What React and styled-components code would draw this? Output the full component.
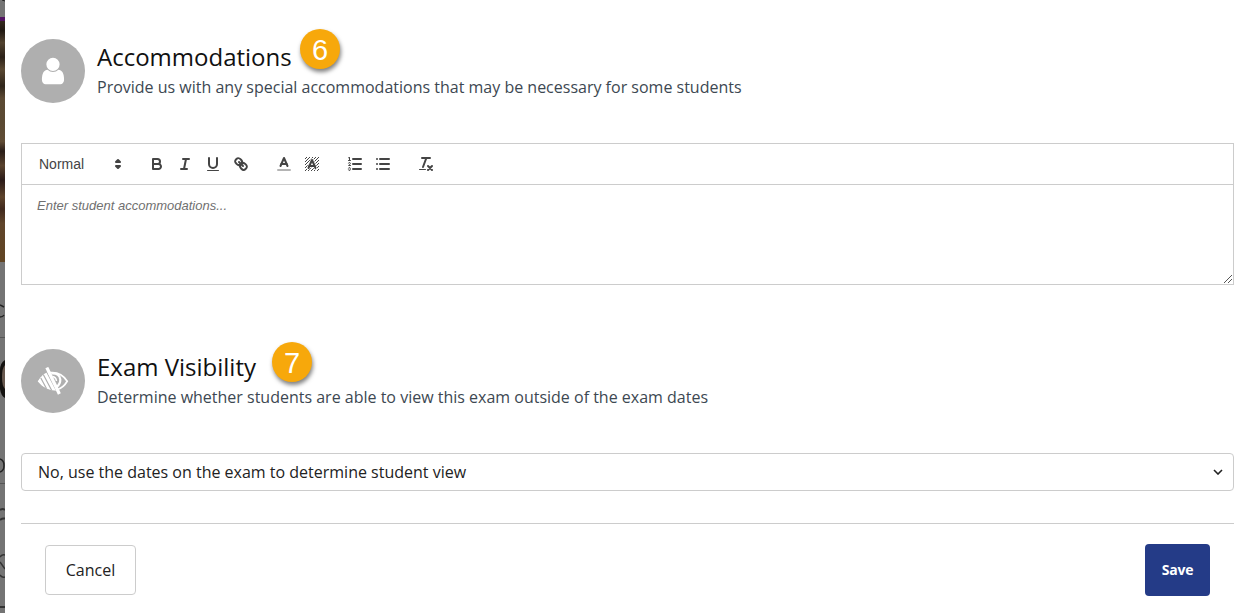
import styled, { createGlobalStyle } from 'styled-components';

const App = () => {
  return (
    <Page>
      <GlobalStyle />
      <PageEdge />
      <Modal>
        <Section>
          <SectionHeader icon={<UserIcon />} title='Accommodations' step='6' stepX={279} stepY={-10}>
            Provide us with any special accommodations that may be necessary for some students
          </SectionHeader>
          <Editor>
            <Toolbar />
            <EditorBody>
              Enter student accommodations...
              <ResizeHandle viewBox='0 0 10 10'>
                <path d='M1 9L9 1M5 9L9 5' />
              </ResizeHandle>
            </EditorBody>
          </Editor>
        </Section>
        <Section>
          <SectionHeader icon={<LowVisionIcon />} title='Exam Visibility' step='7' stepX={251} stepY={-7}>
            Determine whether students are able to view this exam outside of the exam dates
          </SectionHeader>
          <Select type='button'>
            No, use the dates on the exam to determine student view
            <Chevron viewBox='0 0 10 6'>
              <path d='M1 1l4 4 4-4' />
            </Chevron>
          </Select>
        </Section>
        <Footer>
          <CancelButton>Cancel</CancelButton>
          <SaveButton>Save</SaveButton>
        </Footer>
      </Modal>
    </Page>
  );
};

export default App;

const SectionHeader = ({ icon, title, step, stepX, stepY, children }) => (
  <Header>
    <IconCircle>{icon}</IconCircle>
    <HeaderText>
      <Title>{title}</Title>
      <Description>{children}</Description>
    </HeaderText>
    <StepBadge $x={stepX} $y={stepY}>
      {step}
    </StepBadge>
  </Header>
);

const UserIcon = () => (
  <svg width='31' height='31' viewBox='30 30 1792 1792' fill='currentColor'>
    <path d='M1536 1399q0 109-62.5 187t-150.5 78h-854q-88 0-150.5-78t-62.5-187q0-85 8.5-160.5t31.5-152 58.5-131 94-89 134.5-34.5q131 128 313 128t313-128q76 0 134.5 34.5t94 89 58.5 131 31.5 152 8.5 160.5zm-256-887q0 159-112.5 271.5t-271.5 112.5-271.5-112.5-112.5-271.5 112.5-271.5 271.5-112.5 271.5 112.5 112.5 271.5z' />
  </svg>
);

// eye with the left half hatched and a slash across it
const LowVisionIcon = () => (
  <svg width='32' height='28' viewBox='0 0 32 28' fill='none' stroke='currentColor'>
    <defs>
      <clipPath id='leftLens'>
        <path d='M0.500 14.500Q5 6.500 11 5L21 24Q8 24 0.500 14.500Z' />
      </clipPath>
    </defs>
    <g clipPath='url(#leftLens)'>
      <path d='M0.500 14.500Q5 6.500 11 5L21 24Q8 24 0.500 14.500Z' fill='currentColor' stroke='none' />
      <path d='M9.500 4.500L20 24.500M6.300 7.500L15 24M3.800 11L10.800 24' stroke='#afafaf' strokeWidth='1.200' />
    </g>
    <path d='M13 5.700Q24 4.500 30.200 14.200Q26.500 20.500 20.500 22.500' strokeWidth='1.700' />
    <path d='M14.500 6.500Q22.500 6 23.300 12.500Q23.500 17 19.500 20' strokeWidth='2.200' />
    <path d='M15.500 9.500Q19 10 19.500 14' strokeWidth='1.500' />
    <path d='M10.500 2L21.700 25.500' strokeWidth='3.200' strokeLinecap='square' />
  </svg>
);

// slice of the dimmed page that stays visible beside the modal
const PageEdge = () => (
  <Edge>
    <svg width='5' height='613' viewBox='0 0 5 613'>
      <defs>
        <linearGradient id='photo' x1='0' y1='0' x2='0' y2='1'>
          <stop offset='0' stopColor='#35291e' />
          <stop offset='0.04' stopColor='#211912' />
          <stop offset='0.09' stopColor='#51422f' />
          <stop offset='0.15' stopColor='#2b2118' />
          <stop offset='0.2' stopColor='#594832' />
          <stop offset='0.27' stopColor='#30261b' />
          <stop offset='0.32' stopColor='#5b4933' />
          <stop offset='0.42' stopColor='#5a4932' />
          <stop offset='0.5' stopColor='#604c35' />
          <stop offset='0.54' stopColor='#2a1d18' />
          <stop offset='0.6' stopColor='#59422d' />
          <stop offset='0.66' stopColor='#2b1b18' />
          <stop offset='0.73' stopColor='#5d432b' />
          <stop offset='0.78' stopColor='#40291d' />
          <stop offset='0.84' stopColor='#60452b' />
          <stop offset='1' stopColor='#614523' />
        </linearGradient>
      </defs>
      <rect width='5' height='613' fill='#747474' />
      <path d='M2 0l3 1' stroke='#222' />
      <rect y='17' width='5' height='4' fill='#521463' />
      <rect y='21' width='5' height='241' fill='url(#photo)' />
      <path d='M0 305l4 2M0 317q3 0 4-2' stroke='#222' strokeWidth='1.5' fill='none' />
      <path d='M0 337.500h5M0 483.500h5' stroke='#555' />
      <path d='M5 360Q0 363 0 370V389Q1 396 5 398Z' fill='#141210' />
      <path d='M5 365Q2 368 2 377T5 389Z' fill='#67584e' />
      <path d='M0 459q4 1 4 6.500T0 472' stroke='#222' strokeWidth='1.500' fill='none' />
      <path d='M0 510q3-2 5 0M0 520q2-2 5-1.500' stroke='#333' strokeWidth='2' fill='none' />
      <path d='M5 555q-3-1-5 2M0 562l5 7M0 575q2 3 5 2' stroke='#333' strokeWidth='1.500' fill='none' />
      <path d='M0 607h5' stroke='#333' strokeWidth='2' />
    </svg>
  </Edge>
);

const Toolbar = () => (
  <ToolbarRow>
    <FormatPicker>
      Normal
      <ToolIcon viewBox='0 0 18 18'>
        <polygon className='both' points='7 11 9 13 11 11 7 11' />
        <polygon className='both' points='7 7 9 5 11 7 7 7' />
      </ToolIcon>
    </FormatPicker>
    <ToolGroup>
      <Tool label='Bold'>
        <path d='M5,4H9.5A2.5,2.5,0,0,1,12,6.5v0A2.5,2.5,0,0,1,9.5,9H5V4Z' />
        <path d='M5,9h5.5A2.5,2.5,0,0,1,13,11.5v0A2.5,2.5,0,0,1,10.5,14H5V9Z' />
      </Tool>
      <Tool label='Italic'>
        <path d='M7 4H13M5 14H11M8 14L10 4' />
      </Tool>
      <Tool label='Underline'>
        <path d='M5,3V9a4.012,4.012,0,0,0,4,4H9a4.012,4.012,0,0,0,4-4V3' />
        <rect className='solid' height='1' rx='0.5' width='12' x='3' y='15' />
      </Tool>
      <Tool label='Link'>
        <path d='M7 7L11 11' />
        <path d='M8.9,4.577a3.476,3.476,0,0,1,.36,4.679A3.476,3.476,0,0,1,4.577,8.9C3.185,7.5,2.035,6.4,4.217,4.217S7.5,3.185,8.9,4.577Z' />
        <path d='M13.423,9.1a3.476,3.476,0,0,0-4.679-.36,3.476,3.476,0,0,0,.36,4.679c1.392,1.392,2.5,2.542,4.679.36S14.815,10.5,13.423,9.1Z' />
      </Tool>
    </ToolGroup>
    <ToolGroup>
      <Tool label='Text color'>
        <path opacity='0.4' d='M3 15H15' />
        <polyline points='5.5 11 9 3 12.5 11' />
        <path d='M11.63 9H6.38' />
      </Tool>
      <Tool label='Background color'>
        <path
          className='hatch'
          d='M2 4L4 2M2 7L7 2M2 10L10 2M2 13L13 2M2 16L16 2M5 16L16 5M8 16L16 8M11 16L16 11M14 16L16 14'
        />
        <path className='halo' d='M5.500 13L9 5L12.500 13M11.630 11H6.380' />
        <polyline points='5.5 13 9 5 12.5 13' />
        <path d='M11.63 11H6.38' />
      </Tool>
    </ToolGroup>
    <ToolGroup>
      <Tool label='Ordered list'>
        <path d='M7 4H15M7 9H15M7 14H15' />
        <path className='thin' d='M2.5 5.5H4.5' />
        <path
          className='solid'
          d='M3.5,6A0.5,0.5,0,0,1,3,5.5V3.085l-0.276.138A0.5,0.5,0,0,1,2.053,3c-0.124-.247-0.023-0.324.224-0.447l1-.5A0.5,0.5,0,0,1,4,2.5v3A0.5,0.5,0,0,1,3.5,6Z'
        />
        <path className='thin' d='M4.5,10.5h-2c0-.234,1.85-1.076,1.85-2.234A0.959,0.959,0,0,0,2.5,8.156' />
        <path
          className='thin'
          d='M2.5,14.846a0.959,0.959,0,0,0,1.85-.109A0.7,0.7,0,0,0,3.75,14a0.688,0.688,0,0,0,.6-0.736,0.959,0.959,0,0,0-1.85-.109'
        />
      </Tool>
      <Tool label='Bullet list'>
        <path d='M6 4H15M6 9H15M6 14H15M3 4H3.01M3 9H3.01M3 14H3.01' />
      </Tool>
    </ToolGroup>
    <ToolGroup>
      <Tool label='Clear formatting'>
        <path d='M5 3H13M6 12L9.35 3M11 11L15 15M15 11L11 15' />
        <rect className='solid' height='1' rx='0.5' width='7' x='2' y='14' />
      </Tool>
    </ToolGroup>
  </ToolbarRow>
);

const Tool = ({ label, children }) => (
  <ToolButton type='button' aria-label={label}>
    <ToolIcon viewBox='0 0 18 18'>{children}</ToolIcon>
  </ToolButton>
);

const GlobalStyle = createGlobalStyle`
  * {
    box-sizing: border-box;
  }
  body {
    margin: 0;
    background: #fff;
    font-family: 'Open Sans', sans-serif;
    font-size: 16px;
    color: #222;
  }
`;

const Page = styled.div`
  display: flex;
  height: 613px;
  overflow: hidden;
`;

const Edge = styled.div`
  flex: 0 0 5px;
  svg {
    display: block;
  }
`;

const Modal = styled.main`
  flex: 1;
  padding: 39px 12px 0 16px;
  background: #fff;
`;

const Section = styled.section`
  & + & {
    margin-top: 64px;
  }
`;

const Header = styled.div`
  position: relative;
  display: flex;
  gap: 12px;
  height: 64px;
  margin-bottom: 40px;
`;

const IconCircle = styled.div`
  display: flex;
  align-items: center;
  justify-content: center;
  flex: 0 0 64px;
  height: 64px;
  border-radius: 50%;
  background: #afafaf;
  color: #fff;
`;

const HeaderText = styled.div`
  padding-top: 2px;
`;

const Title = styled.h2`
  margin: 0;
  padding-bottom: 2px;
  font-size: 24px;
  font-weight: 400;
  line-height: 32px;
  color: #111;
`;

const Description = styled.p`
  margin: 0;
  font-size: 16px;
  line-height: 24px;
  color: #3d4852;
`;

const StepBadge = styled.span`
  position: absolute;
  left: ${({ $x }) => $x}px;
  top: ${({ $y }) => $y}px;
  width: 40px;
  height: 40px;
  border-radius: 50%;
  background: #f7a80b;
  box-shadow: 1px 3px 4px rgba(0, 0, 0, 0.5);
  color: #fff;
  font-family: 'Liberation Sans', sans-serif;
  font-size: 29px;
  line-height: 42px;
  text-align: center;
`;

const Editor = styled.div`
  height: 142px;
  border: 1px solid #ccc;
  font-family: 'Liberation Sans', sans-serif;
`;

const ToolbarRow = styled.div`
  display: flex;
  align-items: center;
  gap: 15px;
  height: 41px;
  padding-left: 9px;
  border-bottom: 1px solid #ccc;
`;

const FormatPicker = styled.div`
  display: flex;
  align-items: center;
  justify-content: space-between;
  width: 97px;
  padding: 0 1px 0 8px;
  font-size: 14px;
  font-weight: 500;
  color: #444;
`;

const ToolGroup = styled.div`
  display: flex;
`;

const ToolButton = styled.button`
  width: 28px;
  height: 24px;
  padding: 3px 5px;
  border: none;
  background: none;
`;

const ToolIcon = styled.svg`
  display: block;
  width: 18px;
  height: 18px;
  fill: none;
  stroke: #444;
  stroke-width: 2;
  stroke-linecap: round;
  stroke-linejoin: round;
  .solid {
    fill: #444;
    stroke: none;
  }
  .both {
    fill: #444;
  }
  .thin {
    stroke-width: 1;
  }
  .hatch {
    stroke-width: 1;
    stroke-linecap: butt;
  }
  .halo {
    stroke: #fff;
    stroke-width: 3.5;
  }
`;

const EditorBody = styled.div`
  position: relative;
  height: 99px;
  padding: 12px 15px;
  font-size: 13px;
  font-style: italic;
  line-height: 18px;
  color: #707070;
`;

const ResizeHandle = styled.svg`
  position: absolute;
  right: 0;
  bottom: 0;
  width: 10px;
  height: 10px;
  fill: none;
  stroke: #555;
`;

const Select = styled.button`
  display: flex;
  align-items: center;
  justify-content: space-between;
  width: 100%;
  height: 38px;
  padding: 0 10px 0 16px;
  border: 1px solid #ccc;
  border-radius: 4px;
  background: #fff;
  font: inherit;
  color: #222;
`;

const Chevron = styled.svg`
  width: 10px;
  height: 6px;
  fill: none;
  stroke: #222;
  stroke-width: 1.6;
`;

const Footer = styled.footer`
  display: flex;
  align-items: center;
  justify-content: space-between;
  margin-top: 32px;
  padding: 20px 24px;
  border-top: 1px solid #ccc;
`;

const CancelButton = styled.button`
  width: 91px;
  height: 50px;
  border: 1px solid #ccc;
  border-radius: 4px;
  background: #fff;
  font: inherit;
  color: #222;
`;

const SaveButton = styled.button`
  width: 65px;
  height: 52px;
  padding: 0 0 2px;
  border: none;
  border-radius: 4px;
  background: #243b87;
  font: inherit;
  font-size: 14px;
  font-weight: 700;
  letter-spacing: -0.2px;
  color: #fff;
`;
